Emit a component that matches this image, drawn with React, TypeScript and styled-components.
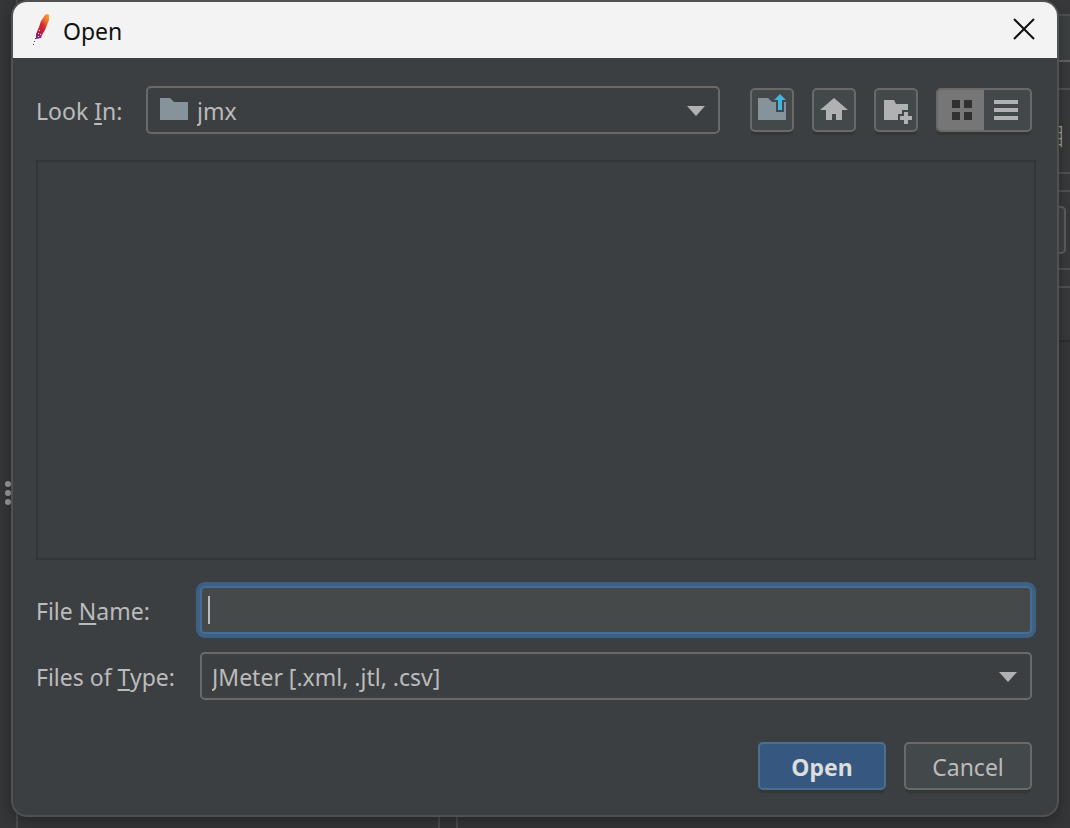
import React, { useState } from "react";
import styled, { createGlobalStyle, css } from "styled-components";

const Global = createGlobalStyle`
  *, *::before, *::after { box-sizing: border-box; }
  body {
    margin: 0;
    background: #343637;
    color: #bbbbbb;
    font-family: "Noto Sans", "Noto Sans CJK SC", sans-serif;
    font-size: 23px;
    line-height: 32px;
  }
  button, input, select { font: inherit; color: inherit; }
`;

const Page = styled.div`
  position: relative;
  min-height: 100vh;
  padding: 0 11px 11px;
  overflow: hidden;
`;

/* The application window that the dialog covers */
const Backdrop = styled.div`
  position: absolute;
  inset: 0;
  display: grid;
  grid-template-columns: 18px 422px 16px 1fr;
`;

const Splitter = styled.div`
  display: flex;
  flex-direction: column;
  align-items: center;
  gap: 3px;
  padding-top: 481px;
  border-right: 2px solid #4a4b4c;
`;

const Dot = styled.span`
  width: 6px;
  height: 6px;
  border-radius: 50%;
  background: #97999a;
`;

const TreePane = styled.div`
  border-right: 2px solid #4a4b4c;
`;

const EditorPane = styled.div`
  grid-column: 4;
  border-left: 2px solid #4a4b4c;
`;

const EditorRow = styled.div<{ $height: number; $line?: string; $fill?: string }>`
  display: flex;
  justify-content: flex-end;
  align-items: center;
  height: ${(p) => p.$height}px;
  padding-right: 4px;
  border-bottom: 2px solid ${(p) => p.$line ?? "#505152"};
  background: ${(p) => p.$fill ?? "#37393b"};
`;

const EditorText = styled.span`
  padding-top: 10px;
  color: #a3a294;
  font-size: 24px;
  font-weight: 300;
`;

const EditorField = styled.div`
  width: 100%;
  height: 48px;
  border: 2px solid #5e5f60;
  border-radius: 5px;
  background: #3e4243;
`;

const Dialog = styled.main`
  position: relative;
  display: flex;
  flex-direction: column;
  min-height: calc(100vh - 11px);
  border: 2px solid #4f5152;
  border-radius: 16px;
  background: #3c3f41;
  box-shadow: 0 4px 14px rgba(0, 0, 0, 0.3);
  overflow: hidden;
`;

const TitleBar = styled.header`
  display: flex;
  align-items: center;
  height: 56px;
  padding: 0 21px 0 18px;
  background: #f3f3f3;
  color: #111111;
`;

const Title = styled.h1`
  flex: 1;
  margin: 0 0 0 12px;
  padding-top: 2px;
  font-size: 23px;
  font-weight: 400;
`;

const CloseButton = styled.button`
  display: flex;
  padding: 0 0 2px;
  border: 0;
  background: none;
`;

const Content = styled.form`
  flex: 1;
  display: flex;
  flex-direction: column;
  padding: 28px 21px 25px 23px;
`;

const Row = styled.div<{ $top?: number }>`
  display: flex;
  align-items: center;
  margin-top: ${(p) => p.$top ?? 0}px;
  padding-right: 4px;
`;

const Label = styled.label<{ $width: number }>`
  flex: none;
  width: ${(p) => p.$width}px;
  padding-top: 2px;
  white-space: nowrap;

  u {
    text-decoration-thickness: 2px;
    text-underline-offset: 3px;
    text-decoration-skip-ink: none;
  }
`;

const Field = styled.div`
  position: relative;
  flex: 1;
  height: 48px;
`;

const Select = styled.select<{ $icon?: boolean }>`
  appearance: none;
  display: block;
  width: 100%;
  height: 48px;
  padding: 2px 40px 0 ${(p) => (p.$icon ? 49 : 10)}px;
  border: 2px solid #6a6969;
  border-radius: 5px;
  background: #3c3f41;
  outline: none;
`;

const FieldIcon = styled.svg<{ $side: "left" | "right" }>`
  position: absolute;
  pointer-events: none;
  ${(p) =>
    p.$side === "left"
      ? css`
          left: 14px;
          top: 12px;
        `
      : css`
          right: 15px;
          top: 20px;
        `}
`;

const TextInput = styled.input`
  display: block;
  width: 100%;
  height: 48px;
  padding: 0 8px;
  border: 2px solid #466d94;
  border-radius: 5px;
  background: #45494a;
  box-shadow: 0 0 0 4px #3d6185;
  caret-color: transparent;
  outline: none;
`;

const Caret = styled.span`
  position: absolute;
  left: 8px;
  top: 10px;
  width: 2px;
  height: 28px;
  background: #bbbbbb;
`;

const Tools = styled.div`
  display: flex;
  gap: 18px;
  margin-left: 30px;
`;

const raised = css`
  border: 2px solid #6a6969;
  border-radius: 5px;
  background: #43484a;
  box-shadow: 0 4px 1px -1px #343738;
`;

const ToolButton = styled.button`
  ${raised}
  display: flex;
  width: 44px;
  height: 44px;
  padding: 0;
`;

const Toggle = styled.div`
  ${raised}
  display: flex;
  width: 96px;
  height: 44px;
`;

const ToggleOption = styled.label<{ $on: boolean }>`
  flex: 1;
  display: flex;
  border-radius: ${(p) => (p.$on ? "3px 0 0 3px" : "0")};
  background: ${(p) => (p.$on ? "#767676" : "transparent")};
  color: ${(p) => (p.$on ? "#313131" : "#afb1b3")};

  input {
    appearance: none;
    width: 0;
    height: 0;
    margin: 0;
  }
`;

const FileList = styled.div`
  flex: 1;
  margin-top: 26px;
  margin-bottom: 26px;
  border: 2px solid #333638;
`;

const Actions = styled.footer`
  display: flex;
  justify-content: flex-end;
  gap: 18px;
  margin-top: 42px;
  padding-right: 4px;
`;

const ActionButton = styled.button<{ $primary?: boolean }>`
  ${raised}
  width: 128px;
  height: 48px;
  padding: 2px 0 0;
  ${(p) =>
    p.$primary &&
    css`
      border-color: #4c708c;
      background: #365880;
      color: #dddddd;
      font-weight: 700;
    `}
`;

const Feather = () => (
  <svg width="20" height="32" viewBox="0 0 20 32" aria-hidden="true">
    <defs>
      <linearGradient id="quill" x1="0.8" y1="0" x2="0.2" y2="1">
        <stop offset="0" stopColor="#f69923" />
        <stop offset="0.25" stopColor="#ec6a2a" />
        <stop offset="0.45" stopColor="#d22a38" />
        <stop offset="0.7" stopColor="#c4203c" />
        <stop offset="1" stopColor="#7a2580" />
      </linearGradient>
    </defs>
    <path
      d="M14 1L16 0L18 1V6L16 11L14 16L11 21L10 24L5 25V20L8 13L10 7Z"
      fill="url(#quill)"
    />
    <path d="M8 16h1v1H8zM7 19h1v1H7zM9 20h1v1H9zM7 22h1v1H7z" fill="#f3d6dc" />
    <path d="M4 24h1v1H4zM3 27h1v1H3zM2 30h1v1H2z" fill="#5b2a86" />
  </svg>
);

const FolderIcon = () => (
  <FieldIcon $side="left" width="28" height="22" aria-hidden="true">
    <path d="M0 0H10L14 4H28V22H0Z" fill="#87939a" />
  </FieldIcon>
);

const ArrowIcon = () => (
  <FieldIcon $side="right" width="18" height="10" aria-hidden="true">
    <path d="M0 0H18L9 10Z" fill="#afb1b3" />
  </FieldIcon>
);

const ToolIcon = ({ children }: { children: React.ReactNode }) => (
  <svg width="40" height="40" viewBox="2 2 40 40" fill="#afb1b3" aria-hidden="true">
    {children}
  </svg>
);

export default function App() {
  const [view, setView] = useState("grid");
  const [name, setName] = useState("");

  return (
    <Page>
      <Global />
      <Backdrop aria-hidden="true">
        <Splitter>
          <Dot />
          <Dot />
          <Dot />
        </Splitter>
        <TreePane />
        <EditorPane>
          <EditorRow $height={16} />
          <EditorRow $height={46} $line="#626364" $fill="#3d4041" />
          <EditorRow $height={28} />
          <EditorRow $height={84}>
            <EditorText>目</EditorText>
          </EditorRow>
          <EditorRow $height={18} />
          <EditorRow $height={78}>
            <EditorField />
          </EditorRow>
          <EditorRow $height={18} />
          <EditorRow $height={54} $line="#2c2d2e" />
        </EditorPane>
      </Backdrop>

      <Dialog role="dialog" aria-label="Open">
        <TitleBar>
          <Feather />
          <Title>Open</Title>
          <CloseButton type="button" aria-label="Close">
            <svg width="24" height="24" viewBox="0 0 24 24" aria-hidden="true">
              <path d="M2 2L22 22M22 2L2 22" stroke="#111111" strokeWidth="2" />
            </svg>
          </CloseButton>
        </TitleBar>

        <Content onSubmit={(e) => e.preventDefault()}>
          <Row>
            <Label htmlFor="folder" $width={110}>
              Look <u>I</u>n:
            </Label>
            <Field>
              <Select id="folder" $icon>
                <option>jmx</option>
              </Select>
              <FolderIcon />
              <ArrowIcon />
            </Field>
            <Tools>
              <ToolButton type="button" aria-label="Up one level">
                <ToolIcon>
                  <path d="M8 10H18L22 14H26V24H34V14H36V32H8Z" fill="#87939a" />
                  <path d="M30 6L36 12H32V22H28V12H24Z" fill="#40b6e0" />
                </ToolIcon>
              </ToolButton>
              <ToolButton type="button" aria-label="Home">
                <ToolIcon>
                  <path d="M22 10L36 22H30V32H24V26H20V32H14V22H8Z" />
                </ToolIcon>
              </ToolButton>
              <ToolButton type="button" aria-label="Create new folder">
                <ToolIcon>
                  <path d="M10 12H20L22 16H34V22H28V26H24V32H10Z" />
                  <path d="M30 24H34V28H38V32H34V36H30V32H26V28H30Z" />
                </ToolIcon>
              </ToolButton>
              <Toggle role="radiogroup" aria-label="View">
                <ToggleOption $on={view === "grid"}>
                  <input
                    type="radio"
                    name="view"
                    aria-label="List"
                    checked={view === "grid"}
                    onChange={() => setView("grid")}
                  />
                  <svg width="46" height="40" fill="currentColor" aria-hidden="true">
                    <path d="M14 10h8v8h-8zM26 10h8v8h-8zM14 22h8v8h-8zM26 22h8v8h-8z" />
                  </svg>
                </ToggleOption>
                <ToggleOption $on={view === "details"}>
                  <input
                    type="radio"
                    name="view"
                    aria-label="Details"
                    checked={view === "details"}
                    onChange={() => setView("details")}
                  />
                  <svg width="46" height="40" fill="currentColor" aria-hidden="true">
                    <path d="M10 10h24v4H10zM10 18h24v4H10zM10 26h24v4H10z" />
                  </svg>
                </ToggleOption>
              </Toggle>
            </Tools>
          </Row>

          <FileList />

          <Row>
            <Label htmlFor="file-name" $width={164}>
              File <u>N</u>ame:
            </Label>
            <Field>
              <TextInput
                id="file-name"
                type="text"
                value={name}
                onChange={(e) => setName(e.target.value)}
              />
              {name === "" && <Caret />}
            </Field>
          </Row>
          <Row $top={18}>
            <Label htmlFor="file-type" $width={164}>
              Files of <u>T</u>ype:
            </Label>
            <Field>
              <Select id="file-type">
                <option>JMeter [.xml, .jtl, .csv]</option>
              </Select>
              <ArrowIcon />
            </Field>
          </Row>

          <Actions>
            <ActionButton type="submit" $primary>
              Open
            </ActionButton>
            <ActionButton type="button">Cancel</ActionButton>
          </Actions>
        </Content>
      </Dialog>
    </Page>
  );
}
